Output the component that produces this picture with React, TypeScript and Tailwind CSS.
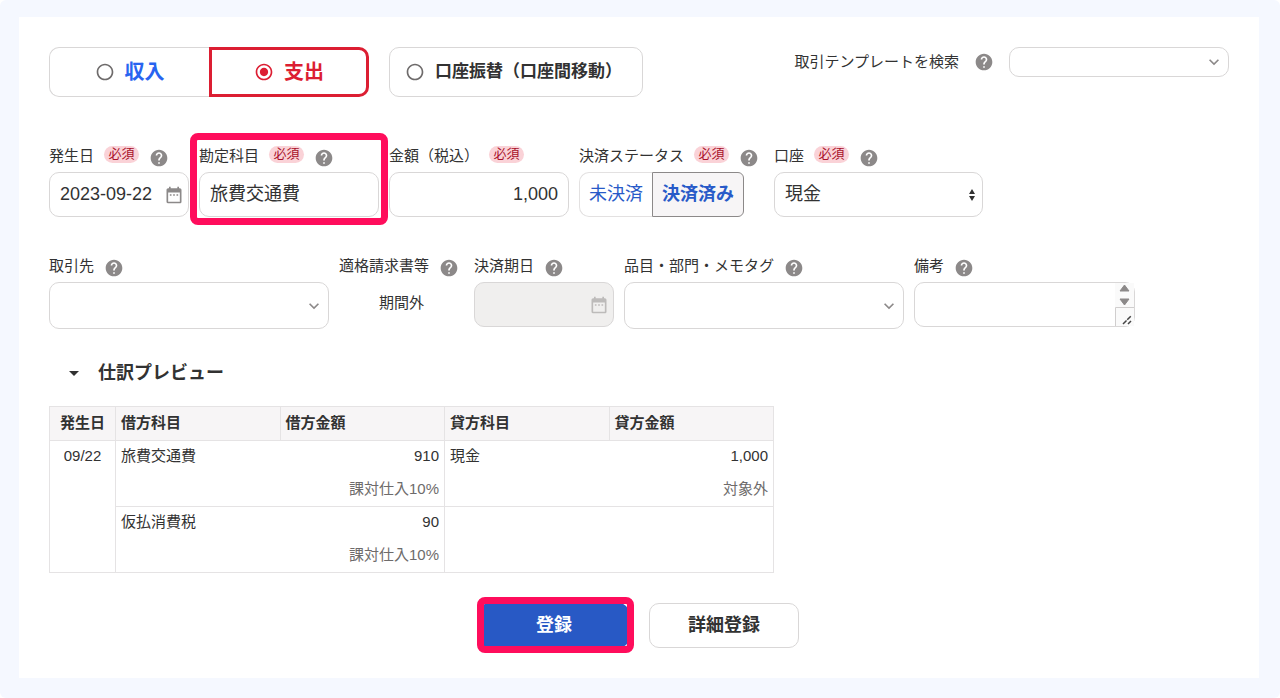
import { useState } from "react";
import type { ReactNode } from "react";
import {
  MdArrowDropDown,
  MdDateRange,
  MdExpandMore,
  MdHelp,
  MdRadioButtonChecked,
  MdRadioButtonUnchecked,
} from "react-icons/md";

const JOURNAL = [
  { debit: "旅費交通費", debitAmount: "910", debitTax: "課対仕入10%", credit: "現金", creditAmount: "1,000", creditTax: "対象外" },
  { debit: "仮払消費税", debitAmount: "90", debitTax: "課対仕入10%", credit: "", creditAmount: "", creditTax: "" },
];

function Radio({ checked, onChange }: { checked: boolean; onChange: () => void }) {
  return (
    <span className="relative h-5 w-5 shrink-0">
      <input type="radio" name="kind" checked={checked} onChange={onChange} className="absolute inset-0 h-full w-full opacity-0" />
      {checked ? (
        <MdRadioButtonChecked size={20} className="text-[#dc1e32]" />
      ) : (
        <MdRadioButtonUnchecked size={20} className="text-[#6e6b6b]" />
      )}
    </span>
  );
}

function Help() {
  return (
    <button type="button" aria-label="ヘルプ" className="block h-5 w-5 shrink-0 text-[#8c8989]">
      <MdHelp size={20} />
    </button>
  );
}

type FieldProps = {
  id: string;
  label: string;
  required?: boolean;
  help?: boolean;
  className?: string;
  children: ReactNode;
};

function Field({ id, label, required, help = true, className = "", children }: FieldProps) {
  return (
    <div className={`relative ${className}`}>
      <div className="mb-1 flex h-6 gap-2.5 whitespace-nowrap">
        <label htmlFor={id} className="text-[15px] leading-6">
          {label}
        </label>
        {required && (
          <span className="mt-0.5 h-[17px] w-[35px] rounded-full bg-[#fad2d7] text-center text-[13px] leading-4 text-[#a8102a]">
            必須
          </span>
        )}
        {help && (
          <span className="self-end pr-[5px]">
            <Help />
          </span>
        )}
      </div>
      {children}
    </div>
  );
}

function ComboBox({ id, size = "h-[47px] w-[280px]" }: { id: string; size?: string }) {
  return (
    <div className={`relative ${size}`}>
      <select id={id} className="h-full w-full appearance-none rounded-[10px] border border-[#d9d7d7] bg-white px-2.5 text-[18px]">
        <option value=""></option>
      </select>
      <MdExpandMore size={20} className="pointer-events-none absolute inset-y-0 right-[5px] my-auto text-[#8c8989]" />
    </div>
  );
}

export default function App() {
  const [kind, setKind] = useState("expense");
  const [settled, setSettled] = useState(true);
  const [open, setOpen] = useState(true);

  return (
    <div className="min-h-screen rounded-md bg-[#f5f8ff] pt-[17px] pr-[21px] pb-5 pl-[19px] font-['Liberation_Sans','Noto_Sans_CJK_JP',sans-serif] text-[#323232]">
      <form className="bg-white p-[30px]" onSubmit={(e) => e.preventDefault()}>
        {/* Transaction kind + template search */}
        <div className="flex flex-wrap items-start justify-between">
          <div className="flex gap-5">
            <div className="flex">
              <label className="flex h-[50px] w-[160px] items-center justify-center gap-2.5 rounded-l-[10px] border border-r-0 border-[#d9d7d7] text-[20px] font-bold text-[#2864f0]">
                <Radio checked={kind === "income"} onChange={() => setKind("income")} />
                収入
              </label>
              <label className="flex h-[50px] w-[160px] items-center justify-center gap-2.5 rounded-r-[10px] border-3 border-[#dc1e32] text-[20px] font-bold text-[#dc1e32]">
                <Radio checked={kind === "expense"} onChange={() => setKind("expense")} />
                支出
              </label>
            </div>
            <label className="flex h-[50px] w-[254px] items-center gap-2.5 rounded-[10px] border border-[#d9d7d7] pl-[15px] text-[17px] font-bold whitespace-nowrap">
              <Radio checked={kind === "transfer"} onChange={() => setKind("transfer")} />
              口座振替（口座間移動）
            </label>
          </div>
          <div className="flex items-center gap-[15px]">
            <label htmlFor="template" className="text-[15px]">
              取引テンプレートを検索
            </label>
            <Help />
            <ComboBox id="template" size="h-[30px] w-[220px]" />
          </div>
        </div>

        {/* Required fields */}
        <div className="mt-[47px] flex flex-wrap gap-2.5">
          <Field id="date" label="発生日" required className="w-[140px]">
            <div className="flex h-[45px] items-center rounded-[10px] border border-[#d9d7d7] pr-1 pl-2.5">
              <input id="date" type="text" defaultValue="2023-09-22" className="min-w-0 flex-1 bg-transparent text-[18px] outline-none" />
              <MdDateRange size={20} className="shrink-0 text-[#8c8989]" />
            </div>
          </Field>
          <Field id="account" label="勘定科目" required className="w-[180px]">
            <input id="account" type="text" defaultValue="旅費交通費" className="h-[45px] w-full rounded-[10px] border border-[#d9d7d7] px-2.5 pb-1.5 text-[18px]" />
            <div className="pointer-events-none absolute -inset-x-[9px] -top-[11px] -bottom-2 z-10 rounded-lg border-7 border-[#ff0d5c]" />
          </Field>
          <Field id="amount" label="金額（税込）" required help={false} className="w-[180px]">
            <input id="amount" type="text" defaultValue="1,000" className="h-[45px] w-full rounded-[10px] border border-[#d9d7d7] px-2.5 text-right text-[18px]" />
          </Field>
          <Field id="status" label="決済ステータス" required className="w-[185px]">
            <div className="flex h-[45px] text-[18px] text-[#285ac8]">
              <button id="status" type="button" aria-pressed={!settled} onClick={() => setSettled(false)} className="w-[73px] rounded-l-[10px] border border-r-0 border-[#e3e1e1] bg-white">
                未決済
              </button>
              <button type="button" aria-pressed={settled} onClick={() => setSettled(true)} className="w-[92px] rounded-r-[6px] border border-[#8c8989] bg-[#f7f5f6] font-bold">
                決済済み
              </button>
            </div>
          </Field>
          <Field id="wallet" label="口座" required className="w-[209px]">
            <div className="relative h-[45px]">
              <select id="wallet" className="h-full w-full appearance-none rounded-[10px] border border-[#d9d7d7] bg-white px-2.5 text-[18px]">
                <option>現金</option>
              </select>
              <svg viewBox="0 0 8 14" className="pointer-events-none absolute inset-y-0 right-[7px] my-auto h-[14px] w-2" fill="#323232">
                <path d="M4 1 7 6H1zM4 13 1 8h6z" />
              </svg>
            </div>
          </Field>
        </div>

        {/* Optional fields */}
        <div className="mt-[37px] flex flex-wrap gap-2.5">
          <Field id="partner" label="取引先" className="w-[280px]">
            <ComboBox id="partner" />
          </Field>
          <Field id="invoice" label="適格請求書等" className="w-[125px]">
            <output id="invoice" className="block text-center text-[15px] leading-[42px]">
              期間外
            </output>
          </Field>
          <Field id="due" label="決済期日" className="w-[140px]">
            <div className="flex h-[45px] items-center rounded-[10px] border border-[#d9d7d7] bg-[#f0efee] pr-1 pl-2.5">
              <input id="due" type="text" disabled className="min-w-0 flex-1 bg-transparent text-[18px]" />
              <MdDateRange size={20} className="shrink-0 text-[#bdbbba]" />
            </div>
          </Field>
          <Field id="tags" label="品目・部門・メモタグ" className="w-[280px]">
            <ComboBox id="tags" />
          </Field>
          <Field id="memo" label="備考" className="w-[221px]">
            <div className="flex h-[45px] rounded-[10px] border border-[#d9d7d7]">
              <textarea id="memo" className="min-w-0 flex-1 resize-none overflow-hidden rounded-l-[10px] px-2.5 py-2 text-[18px] outline-none" />
              <svg viewBox="0 0 19 43" className="h-[43px] w-[19px] shrink-0">
                <path d="M0 0h19v43H0z" fill="#fafafa" />
                <path d="M9.5 2 14 8H5zM9.5 22 5 16h9z" fill="#8c8989" stroke="#8c8989" strokeLinejoin="round" />
                <path d="M.5 43V24.5H19" fill="none" stroke="#d0cece" />
                <path d="m8 41 8-8M13 41l3-3" fill="none" stroke="#444" strokeWidth="1.5" strokeDasharray="5 1" />
              </svg>
            </div>
          </Field>
        </div>

        {/* Journal preview */}
        <h2 className="mt-8">
          <button type="button" aria-expanded={open} onClick={() => setOpen(!open)} className="flex items-center gap-3 pl-[13px] text-[18px] leading-6 font-bold">
            <MdArrowDropDown size={24} />
            仕訳プレビュー
          </button>
        </h2>
        {open && (
          <table className="mt-[21px] w-[725px] max-w-full table-fixed border-collapse border border-[#e5e3e4] text-[15px]">
            <thead>
              <tr className="h-[34px] bg-[#f7f5f6] text-left align-top leading-[31px] [&>th]:border [&>th]:border-[#e5e3e4] [&>th]:py-0 [&>th]:pl-[5px] [&>th]:align-top">
                <th className="w-[66px] pr-[5px] text-center">発生日</th>
                <th>借方科目</th>
                <th>借方金額</th>
                <th>貸方科目</th>
                <th>貸方金額</th>
              </tr>
            </thead>
            <tbody>
              {JOURNAL.map((row, i) => (
                <tr key={row.debit} className="h-[66px] border-b border-[#e5e3e4] align-top leading-[30px] [&>td]:px-[5px] [&>td]:py-0">
                  {i === 0 && (
                    <td rowSpan={JOURNAL.length} className="border-r border-[#e5e3e4] text-center">
                      09/22
                    </td>
                  )}
                  <td>{row.debit}</td>
                  <td className="border-r border-[#e5e3e4] text-right">
                    {row.debitAmount}
                    <p className="leading-[35px] text-[#6e6b6b]">{row.debitTax}</p>
                  </td>
                  <td>{row.credit}</td>
                  <td className="text-right">
                    {row.creditAmount}
                    <p className="leading-[35px] text-[#6e6b6b]">{row.creditTax}</p>
                  </td>
                </tr>
              ))}
            </tbody>
          </table>
        )}

        <div className="mt-[30px] flex justify-center gap-5 text-[18px] font-bold">
          <div className="relative">
            <button type="submit" className="h-[45px] w-[150px] rounded-[10px] bg-[#2859c5] text-white">
              登録
            </button>
            <div className="pointer-events-none absolute -top-1.5 -right-[5px] -bottom-[5px] -left-0.5 rounded-lg border-7 border-[#ff0d5c]" />
          </div>
          <button type="button" className="h-[45px] w-[150px] rounded-[10px] border border-[#d9d7d7] bg-white">
            詳細登録
          </button>
        </div>
      </form>
    </div>
  );
}
